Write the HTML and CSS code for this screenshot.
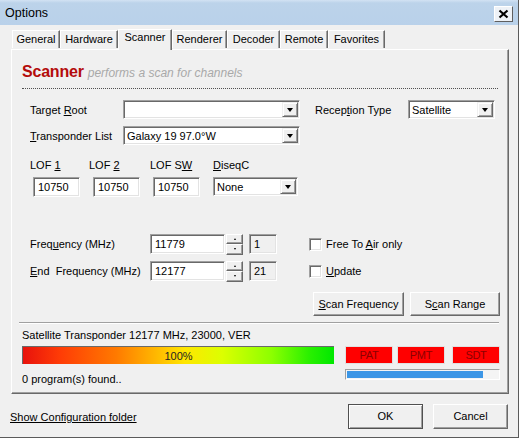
FILE: index.html
```html
<!DOCTYPE html>
<html>
<head>
<meta charset="utf-8">
<title>Options</title>
<link rel="stylesheet" href="styles.css">
</head>
<body>
<div class="window">
  <div class="titlebar">
    <span class="title">Options</span>
    <span class="close"><svg width="11" height="10" viewBox="0 0 11 10"><path d="M1.5 1.5L9.5 8.5M9.5 1.5L1.5 8.5" stroke="#000" stroke-width="2.2"/></svg></span>
  </div>
  <div class="client">
    <div class="tabs">
      <div class="tab t-general">General</div>
      <div class="tab t-hardware">Hardware</div>
      <div class="tab active t-scanner">Scanner</div>
      <div class="tab t-renderer">Renderer</div>
      <div class="tab t-decoder">Decoder</div>
      <div class="tab t-remote">Remote</div>
      <div class="tab t-favorites">Favorites</div>
    </div>
    <div class="panel">
      <div class="header"><span class="h-title">Scanner</span><span class="h-sub">performs a scan for channels</span></div>
      <div class="form">
        <div class="row row-a">
          <span class="lbl lbl-main">Target <u>R</u>oot</span>
          <div class="combo combo-main"><span class="val"></span><span class="drop"><i></i></span></div>
          <span class="lbl lbl-rt">Recep<u>t</u>ion Type</span>
          <div class="combo combo-rt"><span class="val">Satellite</span><span class="drop"><i></i></span></div>
        </div>
        <div class="row row-b">
          <span class="lbl lbl-main"><u>T</u>ransponder List</span>
          <div class="combo combo-main"><span class="val">Galaxy 19 97.0°W</span><span class="drop"><i></i></span></div>
        </div>
        <div class="lof">
          <div class="lof-col c1"><span class="lbl">LOF <u>1</u></span><div class="edit e-lof">10750</div></div>
          <div class="lof-col c2"><span class="lbl">LOF <u>2</u></span><div class="edit e-lof">10750</div></div>
          <div class="lof-col c3"><span class="lbl">LOF S<u>W</u></span><div class="edit e-lof">10750</div></div>
          <div class="lof-col c4"><span class="lbl"><u>D</u>iseqC</span><div class="combo combo-dq"><span class="val">None</span><span class="drop"><i></i></span></div></div>
        </div>
        <div class="freq">
          <div class="frow f1">
            <span class="lbl lbl-f">Freq<u>u</u>ency (MHz)</span>
            <div class="edit e-f">11779</div>
            <div class="spin"><span class="sb up"><i></i></span><span class="sb dn"><i></i></span></div>
            <div class="ro">1</div>
            <label class="chk"><span class="box"></span><span class="chk-text">Free To <u>A</u>ir only</span></label>
          </div>
          <div class="frow f2">
            <span class="lbl lbl-f"><u>E</u>nd&nbsp; Frequency (MHz)</span>
            <div class="edit e-f">12177</div>
            <div class="spin"><span class="sb up"><i></i></span><span class="sb dn"><i></i></span></div>
            <div class="ro">21</div>
            <label class="chk"><span class="box"></span><span class="chk-text"><u>U</u>pdate</span></label>
          </div>
        </div>
        <div class="btnrow">
          <span class="btn b-sf"><span><u>S</u>can Frequency</span></span>
          <span class="btn b-sr"><span>S<u>c</u>an Range</span></span>
        </div>
      </div>
      <div class="sep"></div>
      <div class="status">
        <div class="st-left">
          <div class="st-text">Satellite Transponder 12177 MHz, 23000, VER</div>
          <div class="grad"><span>100%</span></div>
          <div class="st-found">0 program(s) found..</div>
        </div>
        <div class="st-right">
          <div class="flags"><span class="flag">PAT</span><span class="flag">PMT</span><span class="flag">SDT</span></div>
          <div class="prog"><div class="prog-fill" style="width:90%"></div></div>
        </div>
      </div>
    </div>
    <div class="footer">
      <span class="link">Show Configuration folder</span>
      <div class="fbtns">
        <span class="btn b-ok">OK</span>
        <span class="btn b-cancel">Cancel</span>
      </div>
    </div>
  </div>
</div>
</body>
</html>
```
FILE: styles.css
```css
* { box-sizing: border-box; }
html, body { margin: 0; padding: 0; }
body {
  font-family: "Liberation Sans", Arial, sans-serif;
  font-size: 11px;
  color: #000;
  background: #f0f0f0;
}
u { text-decoration: underline; text-underline-offset: 1px; }

.window {
  width: 519px;
  height: 438px;
  background: #f0f0f0;
  border-right: 1px solid #5a5a5a;
  border-bottom: 1px solid #5a5a5a;
  display: flex;
  flex-direction: column;
  overflow: hidden;
}

.titlebar {
  height: 25px;
  flex: none;
  background: linear-gradient(#d2e2f3 0, #bcd3ea 3px, #b9d1ea 100%);
  display: flex;
  align-items: center;
  padding: 0 5px 0 5px;
  justify-content: space-between;
}
.title { font-size: 12.5px; margin-top: 1px; }
.close {
  width: 19px;
  height: 16px;
  background: #eef2f7;
  border: 1px solid;
  border-color: #ffffff #5f5f5f #5f5f5f #ffffff;
  display: flex;
  align-items: center;
  justify-content: center;
  margin-top: 2px;
}

.client { flex: 1; display: flex; flex-direction: column; padding: 0 10px 0 11px; }

.tabs { display: flex; height: 24px; align-items: flex-end; padding-left: 1px; position: relative; z-index: 1; }
.tab {
  height: 18px;
  padding: 2px 0 0 0;
  text-align: center;
  border-left: 1px solid #ffffff;
  border-right: 1px solid #696969;
  border-top: 1px solid #ffffff;
  box-shadow: inset -1px 0 0 #a0a0a0;
  margin-bottom: 1px;
}
.tab.active {
  height: 21px;
  padding-top: 1px;
  background: #f0f0f0;
  margin-bottom: -1px;
  border-top: 1px solid #fff;
}
.t-general { width: 48px; }
.t-hardware { width: 58px; }
.t-scanner { width: 54px; }
.t-renderer { width: 55px; }
.t-decoder { width: 53px; }
.t-remote { width: 48px; }
.t-favorites { width: 57px; }

.panel {
  width: 498px;
  height: 345px;
  border: 1px solid;
  border-color: #ffffff #696969 #696969 #ffffff;
  box-shadow: inset -1px -1px 0 #a0a0a0;
  display: flex;
  flex-direction: column;
}

.header {
  margin: 11px 10px 0 10px;
  padding-top: 1px;
  padding-bottom: 3px;
  border-bottom: 1px dotted #505050;
  height: 28px;
  display: flex;
  align-items: baseline;
  white-space: nowrap;
}
.h-title { font-size: 16px; font-weight: bold; color: #b40c0c; line-height: 20px; letter-spacing: -0.2px; }
.h-sub { font-size: 12px; font-style: italic; color: #a9a9a9; margin-left: 4px; }

.form { padding-left: 18px; }
.lbl { white-space: nowrap; }
.row { display: flex; align-items: center; height: 19px; }
.row-a { margin-top: 11px; }
.row-b { margin-top: 7px; }
.lbl-main { width: 93px; }
.lbl-rt { width: 93px; margin-left: 15px; }

.combo {
  height: 19px;
  background: #fff;
  border: 1px solid;
  border-color: #a0a0a0 #ffffff #ffffff #a0a0a0;
  box-shadow: inset 1px 1px 0 #696969, inset -1px -1px 0 #e3e3e3;
  display: flex;
  align-items: center;
  padding: 0 1px 0 3px;
}
.combo .val { flex: 1; white-space: nowrap; overflow: hidden; padding-top: 0; }
.drop {
  width: 16px;
  height: 15px;
  background: #f0f0f0;
  border: 1px solid;
  border-color: #f0f0f0 #696969 #696969 #f0f0f0;
  box-shadow: inset 1px 1px 0 #fff, inset -1px -1px 0 #a0a0a0;
  display: flex;
  align-items: center;
  justify-content: center;
}
.drop i {
  width: 0; height: 0;
  border-left: 3.5px solid transparent;
  border-right: 3.5px solid transparent;
  border-top: 4px solid #000;
}
.combo-main { width: 177px; }
.combo-rt { width: 87px; }
.combo-dq { width: 85px; }

.lof { display: flex; margin-top: 13px; }
.lof-col { display: flex; flex-direction: column; }
.lof-col .lbl { height: 14px; line-height: 14px; margin-bottom: 5px; }
.c1 { width: 59px; }
.c2 { width: 61px; }
.c3 { width: 63px; }
.c1 .edit { margin-left: 3px; }
.c2 .edit { margin-left: 4px; }
.c3 .edit { margin-left: 3px; }
.edit {
  height: 20px;
  background: #fff;
  border: 1px solid;
  border-color: #a0a0a0 #ffffff #ffffff #a0a0a0;
  box-shadow: inset 1px 1px 0 #696969, inset -1px -1px 0 #e3e3e3;
  padding: 3px 0 0 4px;
  white-space: nowrap;
}
.e-lof { width: 47px; }
.c4 .combo { height: 19px; margin-top: 0; }

.freq { margin-top: 37px; display: flex; flex-direction: column; gap: 7px; }
.frow { display: flex; align-items: center; height: 20px; }
.lbl-f { width: 120px; }
.e-f { width: 75px; }
.spin { width: 17px; height: 21px; margin-left: 1px; display: flex; flex-direction: column; }
.sb {
  flex: 1;
  background: #f0f0f0;
  border: 1px solid;
  border-color: #ffffff #696969 #696969 #ffffff;
  box-shadow: inset -1px -1px 0 #a0a0a0;
  display: flex;
  align-items: center;
  justify-content: center;
}
.sb i { width: 0; height: 0; border-left: 1.5px solid transparent; border-right: 1.5px solid transparent; }
.sb.up i { border-bottom: 2px solid #000; }
.sb.dn i { border-top: 2px solid #000; }
.ro {
  width: 28px;
  height: 20px;
  margin-left: 6px;
  background: #f0f0f0;
  border: 1px solid;
  border-color: #a0a0a0 #ffffff #ffffff #a0a0a0;
  box-shadow: inset 1px 1px 0 #696969, inset -1px -1px 0 #e3e3e3;
  padding: 3px 0 0 4px;
}
.chk { display: flex; align-items: center; margin-left: 32px; white-space: nowrap; }
.box {
  width: 13px; height: 13px;
  background: #fff;
  border: 1px solid;
  border-color: #a0a0a0 #ffffff #ffffff #a0a0a0;
  box-shadow: inset 1px 1px 0 #696969, inset -1px -1px 0 #e3e3e3;
  margin-right: 4px;
}

.btnrow { display: flex; justify-content: flex-end; gap: 6px; margin: 11px 8px 0 0; }
.btn {
  display: flex;
  align-items: center;
  justify-content: center;
  background: #f0f0f0;
  border: 1px solid;
  border-color: #ffffff #696969 #696969 #ffffff;
  box-shadow: inset -1px -1px 0 #a0a0a0;
  white-space: nowrap;
}
.b-sf { width: 91px; height: 24px; }
.b-sr { width: 90px; height: 24px; }

.sep { margin: 6px 9px 0 7px; border-top: 1px solid #a0a0a0; border-bottom: 1px solid #fff; }

.status { display: flex; justify-content: space-between; margin: 0 8px 0 10px; }
.st-left { width: 312px; }
.st-text { margin-top: 5px; height: 17px; line-height: 13px; white-space: nowrap; }
.grad {
  height: 18px;
  border-top: 1px solid #696969;
  border-left: 1px solid #696969;
  background: linear-gradient(90deg, #e8120c 0%, #ff3c06 12%, #ff7a00 30%, #ffb400 42%, #ffe600 52%, #dcff00 64%, #8cff00 80%, #2af000 92%, #00e800 100%);
  display: flex;
  align-items: center;
  justify-content: center;
}
.grad span { font-size: 11px; color: #222; margin-top: 1px; }
.st-found { margin-top: 9px; white-space: nowrap; }

.st-right { width: 155px; padding-top: 22px; }
.flags { display: flex; gap: 4px; height: 18px; }
.flag {
  flex: 1;
  background: #ff0000;
  border: 1px solid #e0e0e0;
  color: #8c0000;
  font-size: 11px;
  line-height: 16px;
  display: flex;
  align-items: center;
  justify-content: center;
  letter-spacing: -0.3px;
}
.flags .flag:nth-child(3) { margin-left: 3px; }
.prog {
  margin-top: 5px;
  height: 11px;
  border: 1px solid;
  border-color: #a0a0a0 #fff #fff #a0a0a0;
  background: #f4f4f4;
  padding: 1px;
}
.prog-fill { height: 100%; background: #3c96e6; }

.footer { display: flex; justify-content: space-between; align-items: center; height: 43px; padding-bottom: 0; }
.link { text-decoration: underline; margin-left: -1px; margin-top: 3px; }
.fbtns { display: flex; gap: 10px; margin-top: 1px; }
.b-ok { width: 75px; height: 25px; border: 1px solid #505050; box-shadow: inset 1px 1px 0 #fff, inset -1px -1px 0 #a0a0a0; }
.b-cancel { width: 75px; height: 25px; }
```
